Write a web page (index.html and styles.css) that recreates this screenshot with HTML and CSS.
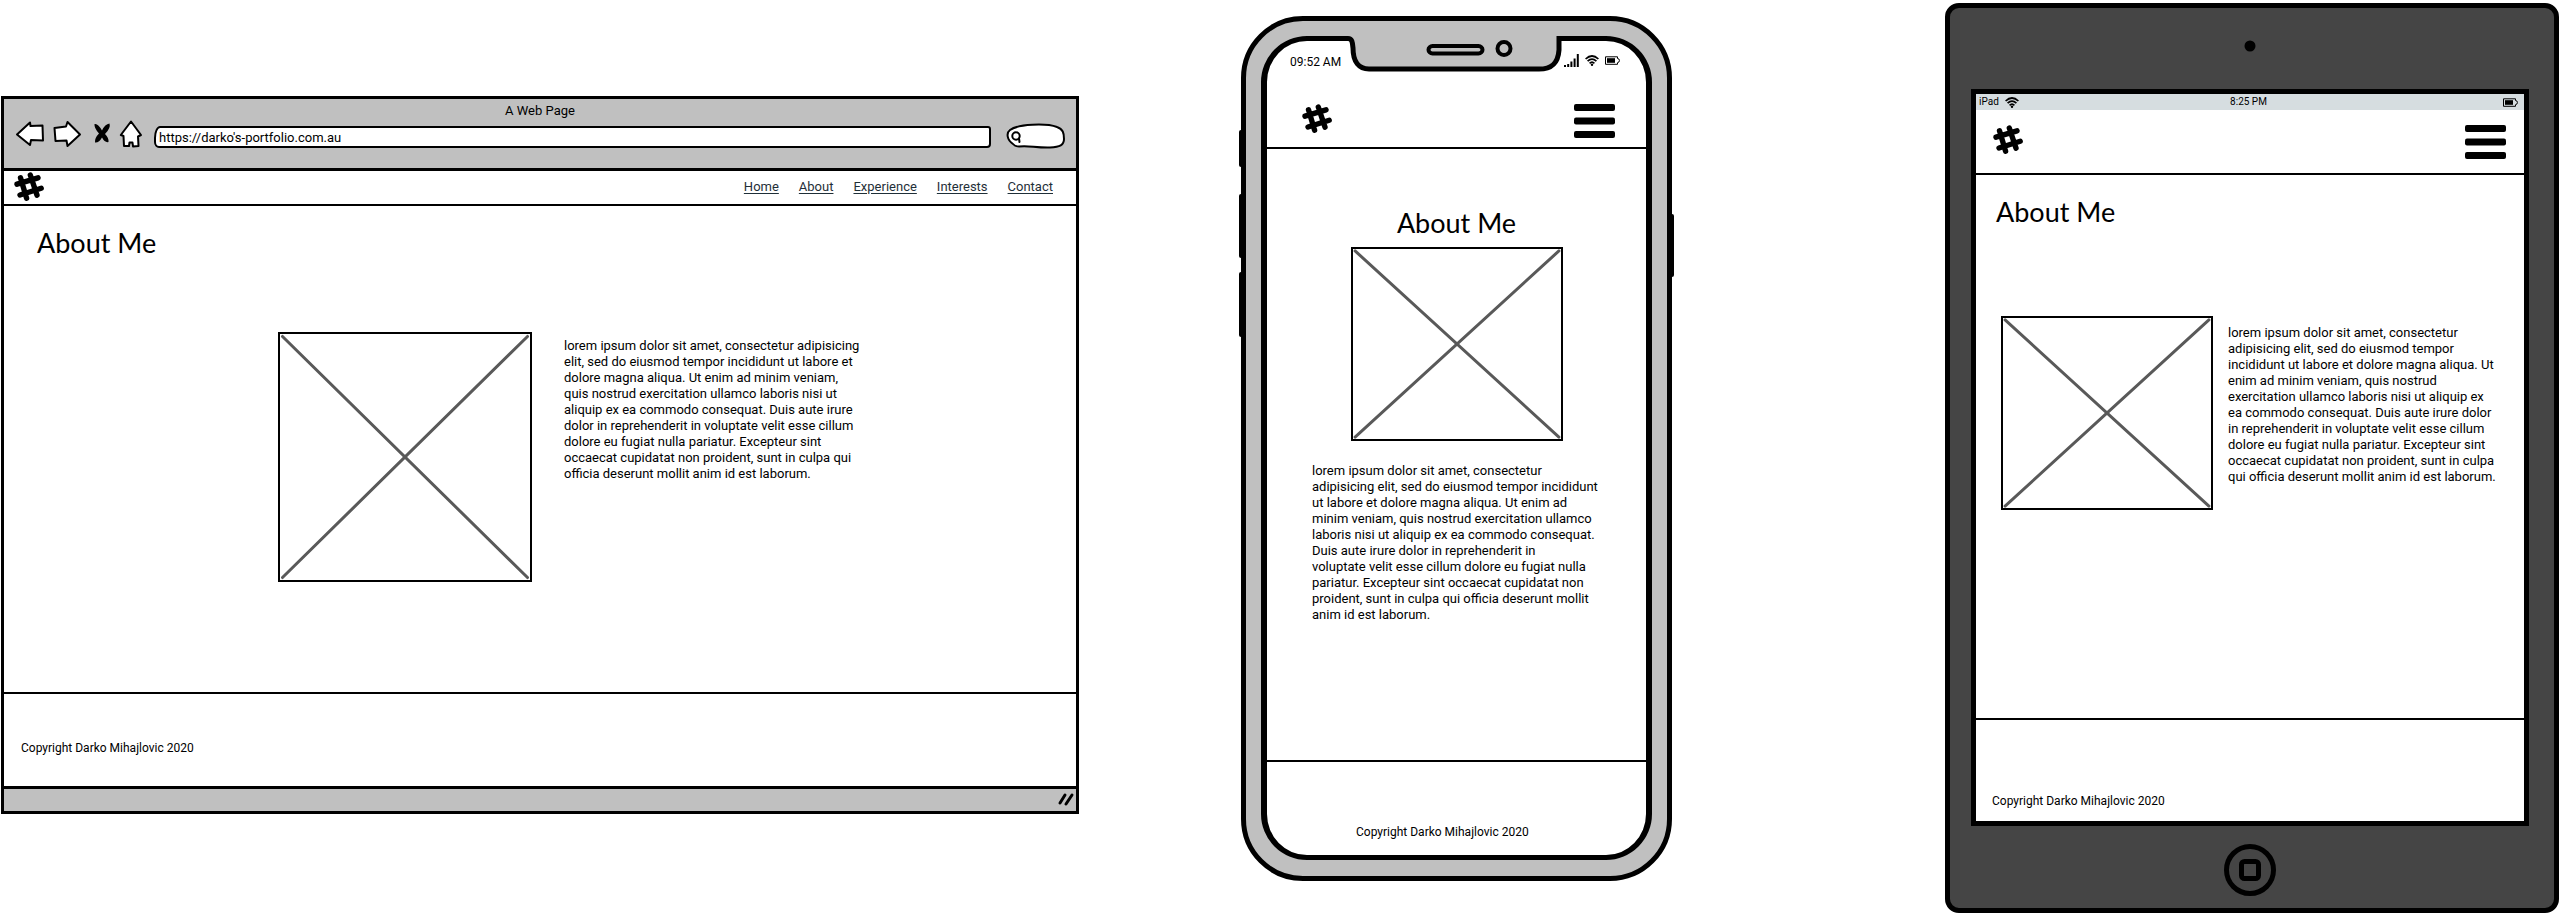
FILE: index.html
```html
<!DOCTYPE html>
<html lang="en">
<head>
<meta charset="utf-8">
<title>About Me wireframes</title>
<link rel="stylesheet" href="styles.css">
</head>
<body>
<svg class="defs" aria-hidden="true">
  <symbol id="hash" viewBox="0 0 30 30">
    <path d="M6.5 5.8 12.6 26.2M16.3 3 23 23.2M3 12.2 24 5.8M6 23 27.2 16.2" fill="none" stroke="#000" stroke-width="5.4" stroke-linecap="round"/>
  </symbol>
  <symbol id="burger" viewBox="0 0 41 34">
    <rect width="41" height="7" rx="2"/><rect y="13.5" width="41" height="7" rx="2"/><rect y="27" width="41" height="7" rx="2"/>
  </symbol>
  <symbol id="wifi" viewBox="0 0 14 11">
    <path d="M.6 4Q7-2 13.400 4M2.600 6.200Q7 2 11.400 6.200M4.600 8.400Q7 6 9.400 8.400" fill="none" stroke="#000" stroke-width="1.700"/><circle cx="7" cy="9.700" r="1.200"/>
  </symbol>
  <symbol id="battery" viewBox="0 0 15 9">
    <path d="M.5.8H12.5V2.5Q14.4 2.5 14.4 4.5T12.5 6.7V8.3H.5Z" fill="none" stroke="#000"/><rect x="2" y="2.2" width="8" height="4.6"/>
  </symbol>
  <symbol id="signal" viewBox="0 0 15 13">
    <path d="M0 11h2v2H0zM3.2 10h2v3h-2zM6.4 7.5h2V13h-2zM9.6 4.5h2V13h-2zM12.8 0h2v13h-2z"/>
  </symbol>
</svg>
<main class="board">

  <section class="browser" aria-label="Desktop">
    <header class="chrome">
      <p class="chrome-title">A Web Page</p>
      <div class="toolbar">
        <button class="tool" aria-label="Back"><svg width="30" height="28"><path class="ink" d="M2 14.5 15 2.5 15.5 6 27.5 5.5 28 20.5 16 20 15 25Z"/></svg></button>
        <button class="tool" aria-label="Forward"><svg width="30" height="28"><path class="ink" d="M1.5 8 13 6.5 14.5 2 27 14.5 14.5 26 13.5 20.5 2.5 21Z"/></svg></button>
        <button class="tool" aria-label="Stop"><svg width="20" height="28"><path d="M3.5 4Q7 3 11 10.5 14 4 18.5 3.5 20 8 14 14 18 18 17.5 22 14 23 11 17.5 8 23 4 22.5 3.5 18 8 13.5 3 8 3.5 4Z"/></svg></button>
        <button class="tool" aria-label="Home"><svg width="24" height="28"><path class="ink" d="M12 1.5 22 15 19 16.5 19.5 26 14 26.5 13.5 22.5H10.5L10 26 5 26 4.5 16 1.8 15Z"/></svg></button>
        <input class="url" type="text" aria-label="Address" value="https://darko's-portfolio.com.au">
        <label class="search">
          <svg width="61" height="26" aria-hidden="true"><path class="ink" d="M7 21C1 17 0 10 4 7 12 1 40 0 51 4 57 6 58 10 58 16 58 22 54 24 44 24.500 30 25 22 22 13 23.500Q9 23.500 7 21Z"/><circle cx="10" cy="13" r="3.700" class="ink"/><path class="ink" d="M13 15.500 13.500 19"/></svg>
          <input type="search" aria-label="Search">
        </label>
      </div>
    </header>
    <nav class="nav">
      <svg class="hash"><use href="#hash"/></svg>
      <div class="links"><a href="#">Home</a><a href="#">About</a><a href="#">Experience</a><a href="#">Interests</a><a href="#">Contact</a></div>
    </nav>
    <div class="content">
      <h1>About Me</h1>
      <div class="row">
        <svg class="picture"><line x1="1%" y1="1%" x2="99%" y2="99%"/><line x1="99%" y1="1%" x2="1%" y2="99%"/></svg>
        <p>lorem ipsum dolor sit amet, consectetur adipisicing<br>elit, sed do eiusmod tempor incididunt ut labore et<br>dolore magna aliqua. Ut enim ad minim veniam,<br>quis nostrud exercitation ullamco laboris nisi ut<br>aliquip ex ea commodo consequat. Duis aute irure<br>dolor in reprehenderit in voluptate velit esse cillum<br>dolore eu fugiat nulla pariatur. Excepteur sint<br>occaecat cupidatat non proident, sunt in culpa qui<br>officia deserunt mollit anim id est laborum.</p>
      </div>
    </div>
    <footer>Copyright Darko Mihajlovic 2020</footer>
    <div class="statusbar"><svg width="20" height="20"><path d="M4 14 9 6M10 15 16 6" fill="none" stroke="#000" stroke-width="3" stroke-linecap="round"/></svg></div>
  </section>

  <section class="phone" aria-label="Phone">
    <span class="side mute"></span><span class="side up"></span><span class="side down"></span><span class="side power"></span>
    <div class="screen">
      <svg class="notch" width="220" height="36" aria-hidden="true">
        <path fill="#c0c0c0" d="M3 0V2.500C7 2.500 7.500 6 8 12 8 26 14 33 24 33H194C206 33 213 28 214 14V0Z"/>
        <path fill="none" stroke="#000" stroke-width="5" d="M0 2.500H3C7 2.500 7.500 6 8 12 8 26 14 33 24 33H194C206 33 213 28 214 14V2.500H220"/>
        <rect x="83.500" y="10" width="54" height="7.500" rx="4" fill="#c0c0c0" stroke="#000" stroke-width="4"/>
        <circle cx="159" cy="12.500" r="6.500" fill="#c0c0c0" stroke="#000" stroke-width="4"/>
      </svg>
      <div class="status"><span>09:52 AM</span><span class="glyphs"><svg width="15" height="13"><use href="#signal"/></svg><svg width="14" height="11"><use href="#wifi"/></svg><svg width="15" height="9"><use href="#battery"/></svg></span></div>
      <header class="bar">
        <svg class="hash"><use href="#hash"/></svg>
        <button class="menu" aria-label="Menu"><svg width="41" height="34"><use href="#burger"/></svg></button>
      </header>
      <div class="content">
        <h2>About Me</h2>
        <svg class="picture"><line x1="1%" y1="1%" x2="99%" y2="99%"/><line x1="99%" y1="1%" x2="1%" y2="99%"/></svg>
        <p>lorem ipsum dolor sit amet, consectetur<br>adipisicing elit, sed do eiusmod tempor incididunt<br>ut labore et dolore magna aliqua. Ut enim ad<br>minim veniam, quis nostrud exercitation ullamco<br>laboris nisi ut aliquip ex ea commodo consequat.<br>Duis aute irure dolor in reprehenderit in<br>voluptate velit esse cillum dolore eu fugiat nulla<br>pariatur. Excepteur sint occaecat cupidatat non<br>proident, sunt in culpa qui officia deserunt mollit<br>anim id est laborum.</p>
      </div>
      <footer>Copyright Darko Mihajlovic 2020</footer>
    </div>
  </section>

  <section class="tablet" aria-label="Tablet">
    <div class="lens"><svg width="12" height="12"><circle cx="6" cy="6" r="5.500"/></svg></div>
    <div class="screen">
      <div class="status"><span class="glyphs">iPad <svg width="14" height="11"><use href="#wifi"/></svg></span><span>8:25 PM</span><span class="glyphs end"><svg width="15" height="9"><use href="#battery"/></svg></span></div>
      <header class="bar">
        <svg class="hash"><use href="#hash"/></svg>
        <button class="menu" aria-label="Menu"><svg width="41" height="34"><use href="#burger"/></svg></button>
      </header>
      <div class="content">
        <h2>About Me</h2>
        <div class="row">
          <svg class="picture"><line x1="1%" y1="1%" x2="99%" y2="99%"/><line x1="99%" y1="1%" x2="1%" y2="99%"/></svg>
          <p>lorem ipsum dolor sit amet, consectetur<br>adipisicing elit, sed do eiusmod tempor<br>incididunt ut labore et dolore magna aliqua. Ut<br>enim ad minim veniam, quis nostrud<br>exercitation ullamco laboris nisi ut aliquip ex<br>ea commodo consequat. Duis aute irure dolor<br>in reprehenderit in voluptate velit esse cillum<br>dolore eu fugiat nulla pariatur. Excepteur sint<br>occaecat cupidatat non proident, sunt in culpa<br>qui officia deserunt mollit anim id est laborum.</p>
        </div>
      </div>
      <footer>Copyright Darko Mihajlovic 2020</footer>
    </div>
    <button class="home" aria-label="Home"><svg width="52" height="52"><circle cx="26" cy="26" r="23.500"/><rect x="17.500" y="17.500" width="17" height="17" rx="3"/></svg></button>
  </section>

</main>
</body>
</html>
```
FILE: styles.css
```css
* { box-sizing: border-box; }
body {
  margin: 0;
  background: #fff;
  color: #000;
  font: 13px/16px Roboto, "Liberation Sans", sans-serif;
}
h1, h2 { margin: 0; font: 400 27px/32px Lato, sans-serif; }
p { margin: 0; white-space: nowrap; }
svg { display: block; flex: none; }
button { padding: 0; border: 0; background: none; cursor: pointer; }
input { font: inherit; color: inherit; }
.defs { width: 0; height: 0; position: absolute; }

.board {
  display: grid;
  grid-template-columns: 1078fr 162fr 431fr 273fr 614fr;
  align-items: start;
  padding-left: 1px;
}
.browser { grid-column: 1; margin-top: 96px; border: 3px solid #000; }
.phone { grid-column: 3; margin-top: 16px; }
.tablet { grid-column: 5; margin-top: 3px; }

.hash { width: 30px; height: 30px; }
.row { display: flex; align-items: flex-start; }
.picture { width: 212px; height: 194px; border: 2px solid #000; }
.picture line { stroke: #595959; stroke-width: 3; stroke-linecap: round; }
.ink { fill: #fff; stroke: #000; stroke-width: 2; stroke-linejoin: round; stroke-linecap: round; }
.bar { display: flex; justify-content: space-between; border-bottom: 2px solid #000; }
footer { border-top: 2px solid #000; font-size: 12px; }

/* Browser window */
.chrome { padding-top: 4px; background: #c0c0c0; border-bottom: 3px solid #000; }
.chrome-title { text-align: center; }
.toolbar { display: flex; align-items: flex-end; gap: 8px; padding: 0 9px 19px 11px; }
.tool { height: 30px; }
.url {
  flex: 1;
  min-width: 0;
  height: 22px;
  margin: 0 7px 1px 3px;
  padding: 0 3px;
  border: 2px solid #000;
  border-radius: 6px 3px 4px 5px / 12px 3px 4px 6px;
  background: #fff;
}
.search { position: relative; }
.search input {
  position: absolute;
  inset: 4px 6px 4px 18px;
  width: 36px;
  padding: 0;
  border: 0;
  outline: 0;
  background: none;
}
.nav {
  display: flex;
  align-items: center;
  justify-content: space-between;
  height: 35px;
  padding: 0 23px 2px 10px;
  border-bottom: 2px solid #000;
}
.links { display: flex; gap: 20px; }
.links a { color: #1f2f38; text-underline-offset: 2px; }
.browser .content { padding: 21px 33px 110px; }
.browser .row { gap: 32px; margin-top: 73px; padding-left: 241px; }
.browser .picture { width: 254px; height: 250px; }
.browser .row p { padding-top: 6px; }
.browser footer { padding: 46px 17px 30px; }
.statusbar {
  display: flex;
  justify-content: flex-end;
  height: 25px;
  border-top: 3px solid #000;
  background: #c0c0c0;
}

/* Phone */
.phone {
  position: relative;
  padding: 15px 15px 16px;
  border: 5px solid #000;
  border-radius: 62px;
  background: #c0c0c0;
}
.phone .screen {
  position: relative;
  border: solid #000;
  border-width: 5px 6px;
  border-radius: 46px;
  background: #fff;
}
.side { position: absolute; left: -7px; width: 7px; border-radius: 2px; background: #000; }
.mute { top: 109px; height: 37px; }
.up { top: 173px; height: 64px; }
.down { top: 251px; height: 65px; }
.power { top: 193px; left: auto; right: -7px; height: 63px; }
.notch { position: absolute; top: -5px; left: 0; right: 4px; margin: 0 auto; }
.status { display: flex; justify-content: space-between; }
.glyphs { display: flex; align-items: center; gap: 6px; }
.phone .status { padding: 13px 26px 0 23px; font-size: 12px; }
.phone .glyphs { padding-bottom: 4px; }
.phone .bar { margin-top: 33px; padding: 0 31px 9px 35px; }
.phone .content { padding: 58px 45px 137px; }
.phone h2 { text-align: center; }
.phone .picture { margin: 8px auto 22px; }
.phone footer { padding: 62px 89px 15px; }

/* Tablet */
.tablet {
  padding: 0 25px 12px 21px;
  border: 5px solid #000;
  border-radius: 14px;
  background: #454545;
}
.lens { display: flex; align-items: center; justify-content: center; height: 81px; padding-bottom: 6px; }
.tablet .screen { border: 5px solid #000; background: #fff; }
.tablet .status {
  display: grid;
  grid-template-columns: 1fr auto 1fr;
  padding: 0 6px 0 3px;
  background: #d6dde0;
  font-size: 10px;
}
.end { justify-content: flex-end; }
.tablet .bar { padding: 15px 18px 14px 17px; }
.tablet .content { padding: 21px 20px 208px; }
.tablet .row { gap: 15px; margin-top: 88px; padding-left: 5px; }
.tablet .row p { padding-top: 9px; }
.tablet footer { padding: 73px 16px 12px; }
.home { display: block; margin: 18px auto 0; }
.home svg { fill: none; stroke: #000; stroke-width: 5; }
```
